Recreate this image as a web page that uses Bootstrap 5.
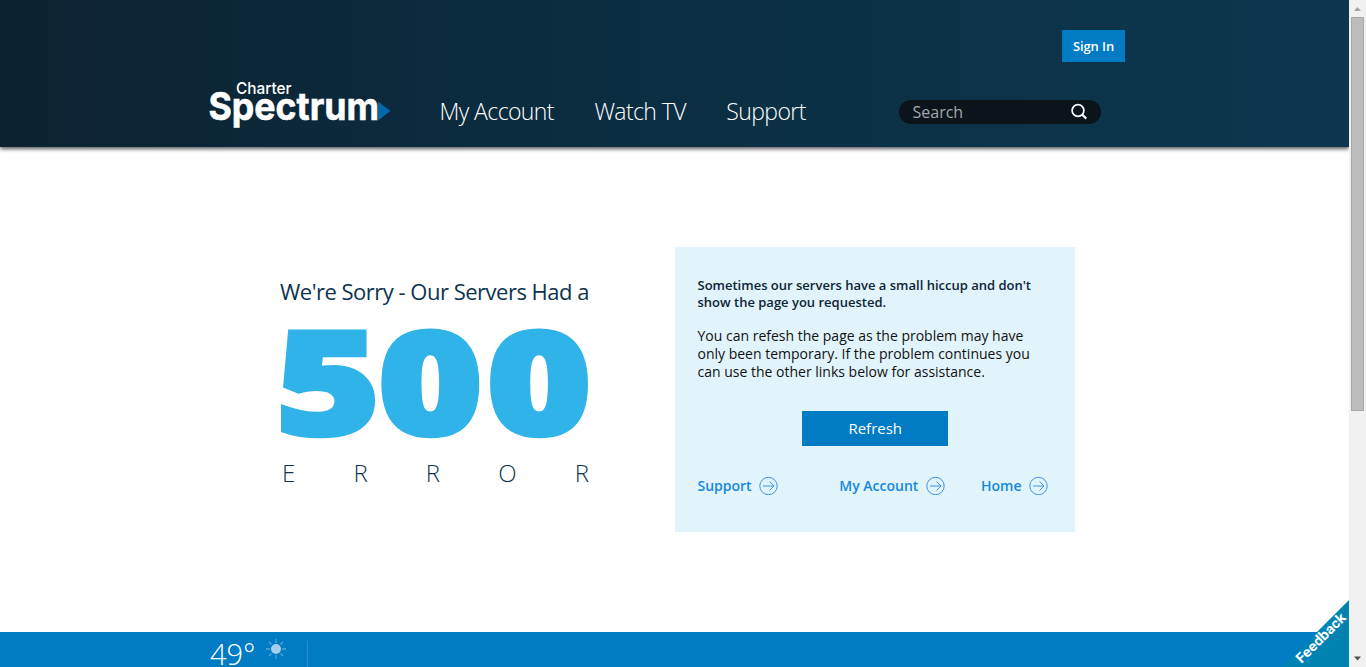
<!DOCTYPE html>
<html lang="en">
<head>
<meta charset="utf-8">
<meta name="viewport" content="width=device-width, initial-scale=1">
<title>Charter Spectrum - 500 Error</title>
<link href="https://cdn.jsdelivr.net/npm/bootstrap@5.3.0/dist/css/bootstrap.min.css" rel="stylesheet">
<style>
body{font-family:"Open Sans","Noto Sans",sans-serif;height:667px;color:#111;line-height:1}
a{text-decoration:none}
.btn{--bs-btn-border-radius:0;--bs-btn-bg:#007bc4;--bs-btn-border-color:#007bc4;line-height:1}
.page{width:1349px}
.site-head{height:147px;background:linear-gradient(90deg,#0c2231,#0b2b3e 35%,#0c3248 70%,#0d374f);box-shadow:0 2px 4px rgba(0,0,0,.65);clip-path:inset(0 0 -10px 0)}
.top-row{height:62px;padding:30px 224px 0 0}
.signin{width:63px;height:32px;font-size:13px;font-weight:600;letter-spacing:-.1px}
.main-row{height:85px;padding-left:205px}
.brand-logo{margin-top:14px}
.main-nav{margin:37px 0 0 44.5px;gap:40.5px;width:459.5px}
.main-nav a{font-size:23px;font-weight:300;letter-spacing:-.6px;color:#fff;line-height:24px;white-space:nowrap}
.search-box{width:202px;height:24px;margin-top:38px;background:#0b141b;padding:0 13px 0 13.5px;color:#a3a7aa;font-size:16px}
.search-box svg{margin-bottom:1px}
.content{height:485px;padding:100px 0 0 280px}
.error-col{width:395px;padding-top:32px}
.error-title{font-size:22px;letter-spacing:-.5px;line-height:24px;color:#0d3350;margin:0;white-space:nowrap}
.error-letters{width:307px;margin:17px 0 0 2px;font-size:24px;font-weight:300;line-height:24px;color:#0d3350}
.help-box{width:400px;height:285px;background:#e1f4fc;padding:30px 22px 0 22.5px}
.lead-text{font-size:13px;line-height:17px;font-weight:600;color:#0d2536;margin-bottom:16px}
.body-text{font-size:14px;line-height:18px;margin-bottom:30px;white-space:nowrap}
.refresh{width:146px;height:35px;font-size:15px}
.links{margin-top:30px;width:350.5px}
.links a{font-size:14px;font-weight:600;color:#1588dc;gap:7.5px}
.links a:nth-child(2){margin-left:25px}
.weather{height:35px;background:#007bc4;padding-left:210px;color:#fff}
.temp{font-size:29px;font-weight:300;line-height:28px;width:55px;margin-top:8px}
.rule{width:1px;height:28px;margin:9px 0 0 20px;background:#248ecd}
.feedback{right:17px;bottom:0}
.scroll-rail{width:17px;background:#f1f1f1}
.thumb{width:13px;height:394px;background:#bcbcbc;border:1px solid #a8a8a8}
</style>
</head>
<body class="d-flex overflow-hidden position-relative bg-white">
<div class="page">
<header class="site-head position-relative">
  <div class="top-row d-flex justify-content-end"><a href="#" class="btn btn-primary signin p-0 d-flex align-items-center justify-content-center">Sign In</a></div>
  <div class="main-row d-flex align-items-start">
    <a href="#" class="brand-logo"><svg class="d-block" width="190" height="60" viewBox="205 76 190 60">
      <text x="236" y="94" font-family="Inter,sans-serif" font-weight="500" font-size="16.500" fill="#fff" textLength="55.500" lengthAdjust="spacingAndGlyphs">Charter</text>
      <text x="208.500" y="120" font-family="Inter,sans-serif" font-weight="700" font-size="38.500" fill="#fff" stroke="#fff" stroke-width=".6" textLength="170.500" lengthAdjust="spacingAndGlyphs">Spectrum</text>
      <path d="M378 101.500L390.500 111 378 120.500z" fill="#0068a8"/></svg></a>
    <nav class="main-nav d-flex"><a href="#">My Account</a><a href="#">Watch TV</a><a href="#">Support</a></nav>
    <form class="search-box rounded-pill d-flex align-items-center justify-content-between"><span>Search</span>
      <svg width="17" height="17" viewBox="0 0 17 17" fill="none" stroke="#fff"><circle cx="7" cy="7.500" r="5.900" stroke-width="1.700"/><path d="M11.300 11.800l4 3.800" stroke-width="2.200"/></svg></form>
  </div>
</header>
<main class="content d-flex">
  <section class="error-col">
    <h1 class="error-title">We're Sorry - Our Servers Had a</h1>
    <svg class="d-block" width="314" height="124" viewBox="280 320 314 124" style="margin-top:17px"><g transform="scale(1.24 1)"><text y="435.200" x="222.400 304.900 392.500" font-weight="800" font-size="144" fill="#2fb3e8" stroke="#2fb3e8" stroke-width="4.700">500</text></g></svg>
    <div class="error-letters d-flex justify-content-between"><span>E</span><span>R</span><span>R</span><span>O</span><span>R</span></div>
  </section>
  <section class="help-box">
    <p class="lead-text">Sometimes our servers have a small hiccup and don't<br>show the page you requested.</p>
    <p class="body-text">You can refesh the page as the problem may have<br>only been temporary. If the problem continues you<br>can use the other links below for assistance.</p>
    <a href="#" class="btn btn-primary refresh mx-auto p-0 d-flex align-items-center justify-content-center">Refresh</a>
    <div class="links d-flex justify-content-between">
      <a href="#" class="d-flex align-items-center">Support <svg width="19" height="19" viewBox="0 0 19 19" fill="none" stroke="#3d94e4"><circle cx="9.500" cy="10" r="8.700"/><path d="M4 10h11M10.500 5.500l4.500 4.500-4.500 4.500"/></svg></a>
      <a href="#" class="d-flex align-items-center">My Account <svg width="19" height="19" viewBox="0 0 19 19" fill="none" stroke="#3d94e4"><circle cx="9.500" cy="10" r="8.700"/><path d="M4 10h11M10.500 5.500l4.500 4.500-4.500 4.500"/></svg></a>
      <a href="#" class="d-flex align-items-center">Home <svg width="19" height="19" viewBox="0 0 19 19" fill="none" stroke="#3d94e4"><circle cx="9.500" cy="10" r="8.700"/><path d="M4 10h11M10.500 5.500l4.500 4.500-4.500 4.500"/></svg></a>
    </div>
  </section>
</main>
<footer class="weather d-flex align-items-start overflow-hidden">
  <span class="temp">49°</span>
  <svg width="22" height="22" viewBox="-11 -11 22 22" style="margin-top:6px"><g stroke="#4fa5d9" stroke-width="1.300"><path d="M0-10v4M0 6v4M-10 0h4M6 0h4M-7-7l2.500 2.500M7-7L4.500-4.500M-7 7l2.500-2.500M7 7L4.500 4.500"/></g><circle r="5" fill="#a3cfec"/></svg>
  <span class="rule"></span>
</footer>
</div>
<aside class="scroll-rail d-flex flex-column align-items-center">
  <svg width="17" height="17" viewBox="0 0 17 17"><path d="M5 11h7L8.500 7z" fill="#a3a3a3"/></svg>
  <div class="thumb"></div>
  <svg class="mt-auto" width="17" height="17" viewBox="0 0 17 17"><path d="M5 6.500h7L8.500 10.500z" fill="#505050"/></svg>
</aside>
<a href="#" class="feedback position-absolute"><svg class="d-block" width="68" height="67" viewBox="0 0 68 67"><path d="M68 0v67H1z" fill="#0083b3"/><text transform="translate(20.500 64) rotate(-45)" font-family="Roboto,sans-serif" font-weight="700" font-size="14" fill="#fff" textLength="64" lengthAdjust="spacingAndGlyphs">Feedback</text></svg></a>
<script src="https://cdn.jsdelivr.net/npm/bootstrap@5.3.0/dist/js/bootstrap.bundle.min.js"></script>
</body>
</html>
